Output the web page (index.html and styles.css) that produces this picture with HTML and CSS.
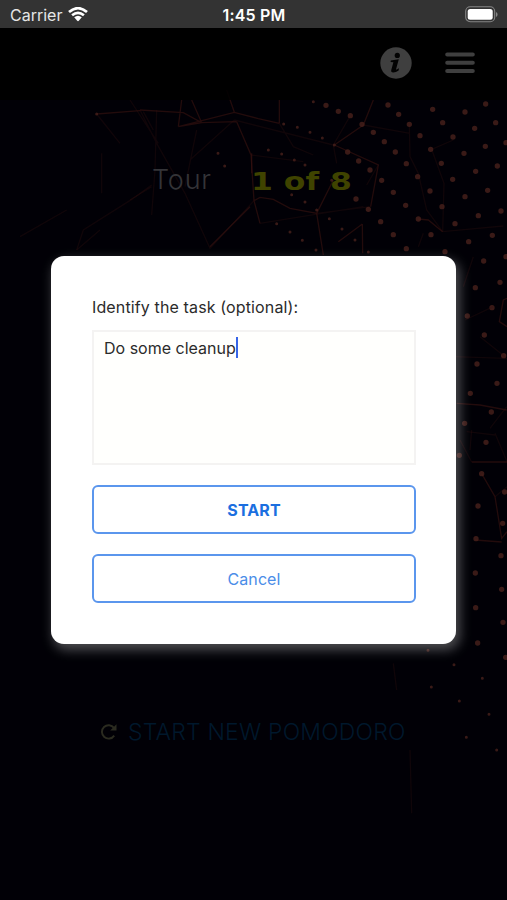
FILE: index.html
```
<!DOCTYPE html>
<html lang="en">
<head>
<meta charset="utf-8">
<title>Pomodoro</title>
<link rel="stylesheet" href="styles.css">
</head>
<body>
<div class="phone">
  <svg class="backdrop" viewBox="0 0 507 900" aria-hidden="true">
    <g transform="translate(130 100) scale(.33333)">
      <path class="web" d="M30 30L160 38 215 68 145 80 313 37 385 56 448 70M320 65L215 68 185 0M313 37L290 -30M145 80L155 0M448 70V0M320 65L363 165 372 302M372 302L390 292 430 298 480 325 560 340 580 465M560 340L610 240M613 135L745 195 722 320M613 135L700 75 730 0M390 370L372 302M697 372L698 460M697 372L625 425M865 357L895 360 938 395"/>
      <path class="web soft" d="M30 30L80 130 165 280 240 445 372 302M80 30L75 210 65 345M85 130L0 0M200 90L165 260M313 60L180 180M363 165L520 185M448 70L490 140 550 165M661 47L610 135 620 190M313 60L610 135M745 195L710 255M838 73L840 170 865 220 890 330 938 395 1120 378M722 320L560 340M938 395L942 250 905 148 970 120M0 300L65 260M-90 390L-160 450M865 440L880 400M700 75L840 100M390 370L700 320"/>
      <path class="dot" d="M588 16h0M625 34h0M661 47h0M696 73h0M730 97h0M763 125h0M796 156h0M829 191h0M863 230h0M900 273h0M936 320h0M975 371h0M1016 425h0M774 15h0M806 43h0M838 73h0M870 107h0M902 148h0M934 190h0M968 238h0M1005 290h0M1045 347h0M1087 406h0M908 28h0M938 68h0M969 111h0M1002 160h0M1037 214h0M1073 271h0M1113 333h0M1005 36h0M1034 85h0M1066 139h0M1102 198h0M1067 12h0M1097 68h0M1128 128h0M653 156h0M686 183h0M720 210h0M755 241h0M790 277h0M827 316h0M865 357h0M903 404h0M945 455h0M678 297h0M715 328h0M752 365h0M790 404h0M829 446h0"/>
      <path class="dot small" d="M550 5h0M461 72h0M502 82h0M540 97h0M577 114h0M613 135h0M493 180h0M525 195h0M485 284h0M525 306h0M560 330h0M598 356h0M636 387h0M675 420h0M715 456h0M440 371h0M480 396h0M517 421h0M558 450h0M455 162h0M415 150h0M264 160h0M284 198h0M605 241h0"/>
    </g>
    <g transform="translate(440 90) scale(.33333)">
      <path class="dot" d="M131 513h0M180 577h0M106 593h0M156 653h0M82 678h0M133 735h0M191 797h0M111 822h0M171 880h0M91 910h0M154 966h0M74 1000h0M198 500h0"/>
      <path class="web" d="M50 940L120 945 200 960M201 625L190 630 178 695 201 710"/>
      <path class="web soft" d="M40 800L200 805M75 690L160 650M120 740L195 800M150 1015L200 950M80 1025L165 1035M100 500L70 590"/>
    </g>
    <g transform="translate(380 430) scale(.33333)">
      <path class="web" d="M275 96H381M305 131L345 200 365 325 381 305M285 330L365 336"/>
      <path class="web soft" d="M345 10L381 95M240 30L275 96M275 0L270 60M345 200L381 170M90 960L95 1150M40 700L50 780"/>
      <path class="dot" d="M318 37h0M238 76h0M305 131h0M374 186h0M294 228h0M368 280h0M288 326h0M363 377h0M286 429h0M365 478h0M287 533h0M369 577h0M293 639h0M377 682h0"/>
      <path class="dot small" d="M222 704h0M307 745h0M238 813h0M327 853h0M259 922h0M350 960h0M154 771h0M144 661h0"/>
    </g>
    <g transform="translate(0 90) scale(.33333)">
      <path class="web" d="M290 72L420 62M755 190V250M630 470L750 350"/>
      <path class="web soft" d="M430 65L460 120M400 325L250 420 230 480M290 72L360 160M305 190V310M200 360L60 440M455 285L400 325"/>
      <path class="dot small" d="M290 72h0"/>
    </g>
  </svg>

  <div class="status">
    <div class="carrier">Carrier
      <svg width="20" height="15" viewBox="0 0 20 15"><path d="M1 5.100Q10-2.700 19 5.100M4.100 8.300Q10 3.500 15.900 8.300" fill="none" stroke="#fff" stroke-width="2.700"/><path d="M6.200 10.200Q10 7.200 13.800 10.200L11 13.600Q10 14.700 9 13.600Z" fill="#fff"/></svg>
    </div>
    <div class="time">1:45 PM</div>
    <svg class="battery" width="33" height="17" viewBox="0 0 33 17"><rect x=".7" y=".8" width="29" height="15" rx="4.500" fill="none" stroke="#858585" stroke-width="1.100"/><rect x="2.700" y="2.900" width="25" height="10.800" rx="2.500" fill="#fff"/><path d="M31 6v5q1.600-.7 1.600-2.500t-1.600-2.500" fill="#858585"/></svg>
  </div>

  <header class="topbar">
    <svg width="32" height="32" viewBox="0 0 32 32"><circle cx="16" cy="16" r="15.700" fill="#3f3f3f"/><circle cx="17.300" cy="8.400" r="2.600" fill="#030303"/><path d="M10.800 13.600L18.800 12.300 15.900 22.700Q17 22.700 19 21.300L18.600 23.500Q15.500 25.800 12 25.300 10.800 24.800 11.200 23.200L13.400 15.300 10.600 15.100Z" fill="#030303"/></svg>
    <svg width="30" height="22" viewBox="0 0 30 22"><path d="M2.200 2.500h25.600M2.200 10.800h25.600M2.200 19.100h25.600" stroke="#3f3f3f" stroke-width="4" stroke-linecap="round"/></svg>
  </header>

  <div class="tour"><span class="tour-label">Tour</span><span class="tour-count">1 of 8</span></div>

  <main class="dialog">
    <label class="label" for="task">Identify the task (optional):</label>
    <div class="field" id="task"><span>Do some cleanup</span><i class="caret"></i></div>
    <button class="btn primary">START</button>
    <button class="btn">Cancel</button>
  </main>

  <div class="restart">
    <svg width="18" height="18" viewBox="0 0 18 18"><path d="M14.200 12.600A6.700 6.700 0 1 1 14 4.900" fill="none" stroke="#2b2b20" stroke-width="1.900"/><path d="M16.500 1.200V7.500H10.200Z" fill="#2b2b20"/></svg>
    <span>START NEW POMODORO</span>
  </div>
</div>
</body>
</html>
```
FILE: styles.css
```
* { box-sizing: border-box; }
body { margin: 0; background: #010006; font-family: Inter, "Liberation Sans", sans-serif; }
.phone { position: relative; width: 507px; height: 900px; overflow: hidden; display: flex; flex-direction: column; }
.backdrop { position: absolute; inset: 0; width: 507px; height: 900px; }
.web { fill: none; stroke: #35110f; stroke-width: 4; opacity: .65; }
.web.soft { opacity: .3; }
.dot { fill: none; stroke: #48201b; stroke-width: 16; stroke-linecap: round; opacity: .8; }
.dot.small { stroke-width: 9; }
.status { position: relative; height: 28px; flex: none; background: #333; color: #fff; display: grid; grid-template-columns: 1fr auto 1fr; align-items: center; padding: 1px 9px 0 10px; font-size: 16px; }
.carrier { display: flex; align-items: center; gap: 6px; color: #e6e6e6; letter-spacing: 0; }
.time { font-weight: 600; font-size: 16px; letter-spacing: .2px; }
.battery { justify-self: end; }
.topbar { position: relative; height: 72px; flex: none; background: rgba(0, 0, 0, .85); display: flex; justify-content: flex-end; align-items: center; gap: 33px; padding: 0 32px 2px 0; }
.tour { position: relative; height: 156px; flex: none; display: flex; align-items: flex-start; gap: 40px; padding: 62px 0 0 152px; }
.tour-label { color: #343438; font-weight: 300; font-size: 27px; line-height: 36px; width: 59px; letter-spacing: .8px; white-space: nowrap; }
.tour-count { color: #3f4300; font: bold 24px/40px "DejaVu Sans", sans-serif; white-space: nowrap; transform: scaleX(1.310); transform-origin: left; }
.dialog { position: relative; width: 405px; height: 388px; flex: none; margin-left: 51px; padding: 40px 40px 40px 41px; background: #fff; border-radius: 13px; box-shadow: 3px 5px 12px 1px rgba(255, 255, 255, .3); display: flex; flex-direction: column; }
.label { flex: none; font-size: 16px; line-height: 22px; letter-spacing: .13px; color: #2b2b2b; white-space: nowrap; }
.field { flex: none; height: 135px; margin: 12px 0 20px; padding: 5px 10px; border: 2px solid #f4f3f2; background: #fffffd; display: flex; align-items: flex-start; color: #2b2b2b; font-size: 16px; line-height: 22px; letter-spacing: 0; white-space: nowrap; }
.caret { width: 2px; height: 21px; background: #3765e8; }
.btn { height: 49px; flex: none; margin: 0 0 20px; padding: 0; border: 2px solid #5b96ed; border-radius: 6px; background: #fff; color: #4a8de8; font: 16px Inter, sans-serif; letter-spacing: .1px; }
.btn.primary { color: #1b6fe0; font-weight: 700; }
.restart { position: relative; margin-top: 70px; padding-left: 100px; display: flex; align-items: center; gap: 10px; height: 36px; color: #00182c; font-size: 23px; font-weight: 300; letter-spacing: .18px; white-space: nowrap; }
```
